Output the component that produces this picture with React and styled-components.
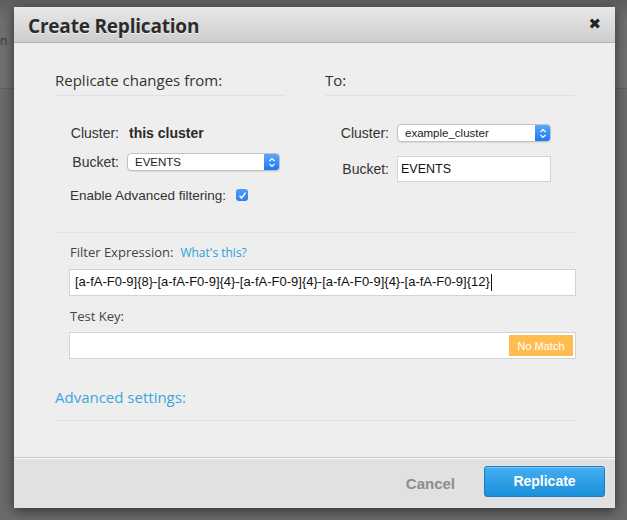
import React from "react";
import styled, { createGlobalStyle } from "styled-components";

const GlobalStyle = createGlobalStyle`
  html, body {
    margin: 0;
    padding: 0;
    background: #6b6b6b;
  }
  body {
    width: 627px;
    height: 520px;
    overflow: hidden;
    font-family: "Open Sans", "DejaVu Sans", sans-serif;
  }
`;

const Screen = styled.div`
  position: relative;
  width: 627px;
  height: 520px;
  background: #6b6b6b;
  overflow: hidden;
`;

const BackdropBar = styled.div`
  height: 88px;
  border-bottom: 1px solid #5f5f5f;
  background: linear-gradient(#5e5e5e 0, #6f6f6f 20px, #707070 100%);
  display: flex;
  align-items: center;
  color: #3c3c3c;
  font-size: 12px;
  font-family: "Open Sans", sans-serif;
`;

const BackdropText = styled.span`
  margin-top: -8px;
`;

const Dialog = styled.div`
  position: absolute;
  left: 14px;
  top: 7px;
  width: 601px;
  height: 501px;
  display: flex;
  flex-direction: column;
  background: #eeeeee;
  box-shadow: 0 3px 12px rgba(0, 0, 0, 0.55);
`;

const Header = styled.div`
  display: flex;
  align-items: center;
  justify-content: space-between;
  padding: 2px 14px 0 14px;
  box-sizing: border-box;
  height: 36px;
  background: linear-gradient(#e8e8e8, #cdcdcd);
  border-bottom: 1px solid #b4b4b4;
  border-radius: 3px 3px 0 0;
`;

const Title = styled.h1`
  margin: 0;
  font-size: 19px;
  font-weight: 700;
  color: #2b2b2b;
  text-shadow: 0 1px 0 rgba(255, 255, 255, 0.7);
  letter-spacing: -0.2px;
`;

const Close = styled.span`
  font-family: "DejaVu Sans", sans-serif;
  font-size: 15px;
  font-weight: 700;
  color: #222;
  line-height: 1;
  margin-top: -2px;
`;

const Body = styled.div`
  flex: 1;
  padding: 27px 39px 0 41px;
`;

const Columns = styled.div`
  display: grid;
  grid-template-columns: 230px 250px;
  column-gap: 40px;
`;

const ColumnHeading = styled.div`
  font-size: 15px;
  line-height: 21px;
  color: #333;
  padding-bottom: 4px;
  border-bottom: 1px solid #dde2e8;
`;

const FieldList = styled.div`
  display: flex;
  flex-direction: column;
  margin-top: 26px;
`;

const FieldRow = styled.div`
  display: flex;
  align-items: center;
  height: ${(p) => p.$h || 22}px;
  margin-top: ${(p) => p.$mt || 0}px;
  padding-left: ${(p) => p.$indent || 0}px;
  gap: ${(p) => (p.$gap === undefined ? 8 : p.$gap)}px;
`;

const FieldLabel = styled.label`
  width: 64px;
  flex: none;
  text-align: right;
  font-family: "Liberation Sans", Arial, sans-serif;
  font-size: 14px;
  color: #333;
`;

const PlainLabel = styled.label`
  font-family: "Liberation Sans", Arial, sans-serif;
  font-size: 13.5px;
  color: #333;
`;

const StaticValue = styled.span`
  font-family: "Liberation Sans", Arial, sans-serif;
  font-size: 14px;
  font-weight: 700;
  color: #2a2a2a;
  padding-left: 2px;
`;

const SelectBox = styled.div`
  width: ${(p) => p.$w}px;
  height: 18px;
  box-sizing: border-box;
  display: flex;
  align-items: stretch;
  background: #fff;
  border: 1px solid #c2c2c2;
  border-radius: 4px;
  overflow: hidden;
  box-shadow: 0 1px 1px rgba(0, 0, 0, 0.08);
`;

const SelectText = styled.span`
  flex: 1;
  padding-left: 7px;
  font-family: "Liberation Sans", Arial, sans-serif;
  font-size: 11.5px;
  line-height: 16px;
  color: #222;
`;

const Stepper = styled.span`
  width: 15px;
  display: flex;
  align-items: center;
  justify-content: center;
  background: linear-gradient(#5aa8fb, #1f77f2);
`;

const TextBox = styled.div`
  width: 154px;
  height: 26px;
  box-sizing: border-box;
  border: 1px solid #cfd4d9;
  background: #fff;
  display: flex;
  align-items: center;
  padding-left: 3px;
  font-family: "Liberation Sans", Arial, sans-serif;
  font-size: 12.5px;
  color: #111;
`;

const Checkbox = styled.span`
  width: 12px;
  height: 12px;
  border-radius: 3px;
  background: linear-gradient(#4d9cf8, #2a7ff2);
  display: flex;
  align-items: center;
  justify-content: center;
`;

const Divider = styled.div`
  height: 1px;
  background: #dfe4e9;
  margin-top: ${(p) => p.$mt}px;
`;

const Section = styled.div`
  padding-left: 14px;
`;

const SectionLabel = styled.div`
  display: flex;
  align-items: baseline;
  gap: 7px;
  margin-top: ${(p) => p.$mt}px;
  margin-left: 1px;
  font-size: 13px;
  line-height: 18px;
  color: #444;
`;

const HelpLink = styled.a`
  font-size: 12px;
  color: #2a9fd8;
  text-decoration: none;
`;

const WideInput = styled.div`
  height: 27px;
  box-sizing: border-box;
  margin-top: ${(p) => p.$mt}px;
  border: 1px solid #cfd4d9;
  background: #fff;
  display: flex;
  align-items: center;
  justify-content: space-between;
  padding: 0 2px 0 5px;
  font-family: "Liberation Sans", Arial, sans-serif;
  font-size: 13px;
  color: #111;
`;

const Caret = styled.span`
  display: inline-block;
  width: 1px;
  height: 17px;
  background: #111;
  vertical-align: middle;
  margin-left: 1px;
`;

const MatchBadge = styled.span`
  width: 64px;
  height: 21px;
  display: flex;
  align-items: center;
  justify-content: center;
  background: #ffbd4f;
  color: #fff;
  font-size: 11px;
`;

const AdvancedLink = styled.a`
  display: block;
  margin-top: 28px;
  font-size: 15px;
  line-height: 20px;
  color: #3aa7dc;
  text-decoration: none;
`;

const Footer = styled.div`
  height: 51px;
  box-sizing: border-box;
  border-top: 1px solid #c6c8ca;
  box-shadow: inset 0 1px 0 #fbfbfb;
  background: #e0e1e0;
  display: flex;
  align-items: center;
  justify-content: flex-end;
  gap: 29px;
  padding: 0 10px 0 0;
`;

const CancelButton = styled.button`
  border: none;
  background: none;
  padding: 0;
  font-family: "Liberation Sans", Arial, sans-serif;
  font-size: 15px;
  font-weight: 700;
  color: #8d8d8d;
`;

const PrimaryButton = styled.button`
  width: 121px;
  height: 31px;
  margin-top: -3px;
  border: 1px solid #1d7cc4;
  border-radius: 3px;
  background: linear-gradient(#45aef0, #1a90dc);
  box-shadow: inset 0 1px 0 rgba(255, 255, 255, 0.3);
  color: #fff;
  font-family: "Liberation Sans", Arial, sans-serif;
  font-size: 14px;
  font-weight: 700;
  padding-bottom: 2px;
`;

const Chevrons = () => (
  <svg width="8" height="11" viewBox="0 0 8 11">
    <path d="M1.5 4 L4 1.5 L6.5 4 M1.5 7 L4 9.5 L6.5 7" fill="none" stroke="#fff" strokeWidth="1.2" />
  </svg>
);

const Select = ({ width, value }) => (
  <SelectBox $w={width}>
    <SelectText>{value}</SelectText>
    <Stepper>
      <Chevrons />
    </Stepper>
  </SelectBox>
);

const Check = () => (
  <svg width="9" height="9" viewBox="0 0 9 9">
    <path d="M1.5 4.8 L3.6 7 L7.6 1.6" fill="none" stroke="#fff" strokeWidth="1.5" />
  </svg>
);

export default function App() {
  return (
    <Screen>
      <GlobalStyle />
      <BackdropBar>
        <BackdropText>n</BackdropText>
      </BackdropBar>
      <Dialog>
        <Header>
          <Title>Create Replication</Title>
          <Close>✖</Close>
        </Header>
        <Body>
          <Columns>
            <div>
              <ColumnHeading>Replicate changes from:</ColumnHeading>
              <FieldList>
                <FieldRow>
                  <FieldLabel>Cluster:</FieldLabel>
                  <StaticValue>this cluster</StaticValue>
                </FieldRow>
                <FieldRow $mt={7}>
                  <FieldLabel>Bucket:</FieldLabel>
                  <Select width={153} value="EVENTS" />
                </FieldRow>
                <FieldRow $mt={11} $indent={15} $gap={10}>
                  <PlainLabel>Enable Advanced filtering:</PlainLabel>
                  <Checkbox>
                    <Check />
                  </Checkbox>
                </FieldRow>
              </FieldList>
            </div>
            <div>
              <ColumnHeading>To:</ColumnHeading>
              <FieldList>
                <FieldRow>
                  <FieldLabel>Cluster:</FieldLabel>
                  <Select width={154} value="example_cluster" />
                </FieldRow>
                <FieldRow $mt={12} $h={26}>
                  <FieldLabel>Bucket:</FieldLabel>
                  <TextBox>EVENTS</TextBox>
                </FieldRow>
              </FieldList>
            </div>
          </Columns>
          <Divider $mt={26} />
          <Section>
            <SectionLabel $mt={10}>
              Filter Expression:
              <HelpLink>What's this?</HelpLink>
            </SectionLabel>
            <WideInput $mt={7}>
              <span>
                [a-fA-F0-9]{"{8}"}-[a-fA-F0-9]{"{4}"}-[a-fA-F0-9]{"{4}"}-[a-fA-F0-9]{"{4}"}-[a-fA-F0-9]{"{12}"}
                <Caret />
              </span>
            </WideInput>
            <SectionLabel $mt={11}>Test Key:</SectionLabel>
            <WideInput $mt={7}>
              <span />
              <MatchBadge>No Match</MatchBadge>
            </WideInput>
          </Section>
          <AdvancedLink>Advanced settings:</AdvancedLink>
          <Divider $mt={13} />
        </Body>
        <Footer>
          <CancelButton>Cancel</CancelButton>
          <PrimaryButton>Replicate</PrimaryButton>
        </Footer>
      </Dialog>
    </Screen>
  );
}
